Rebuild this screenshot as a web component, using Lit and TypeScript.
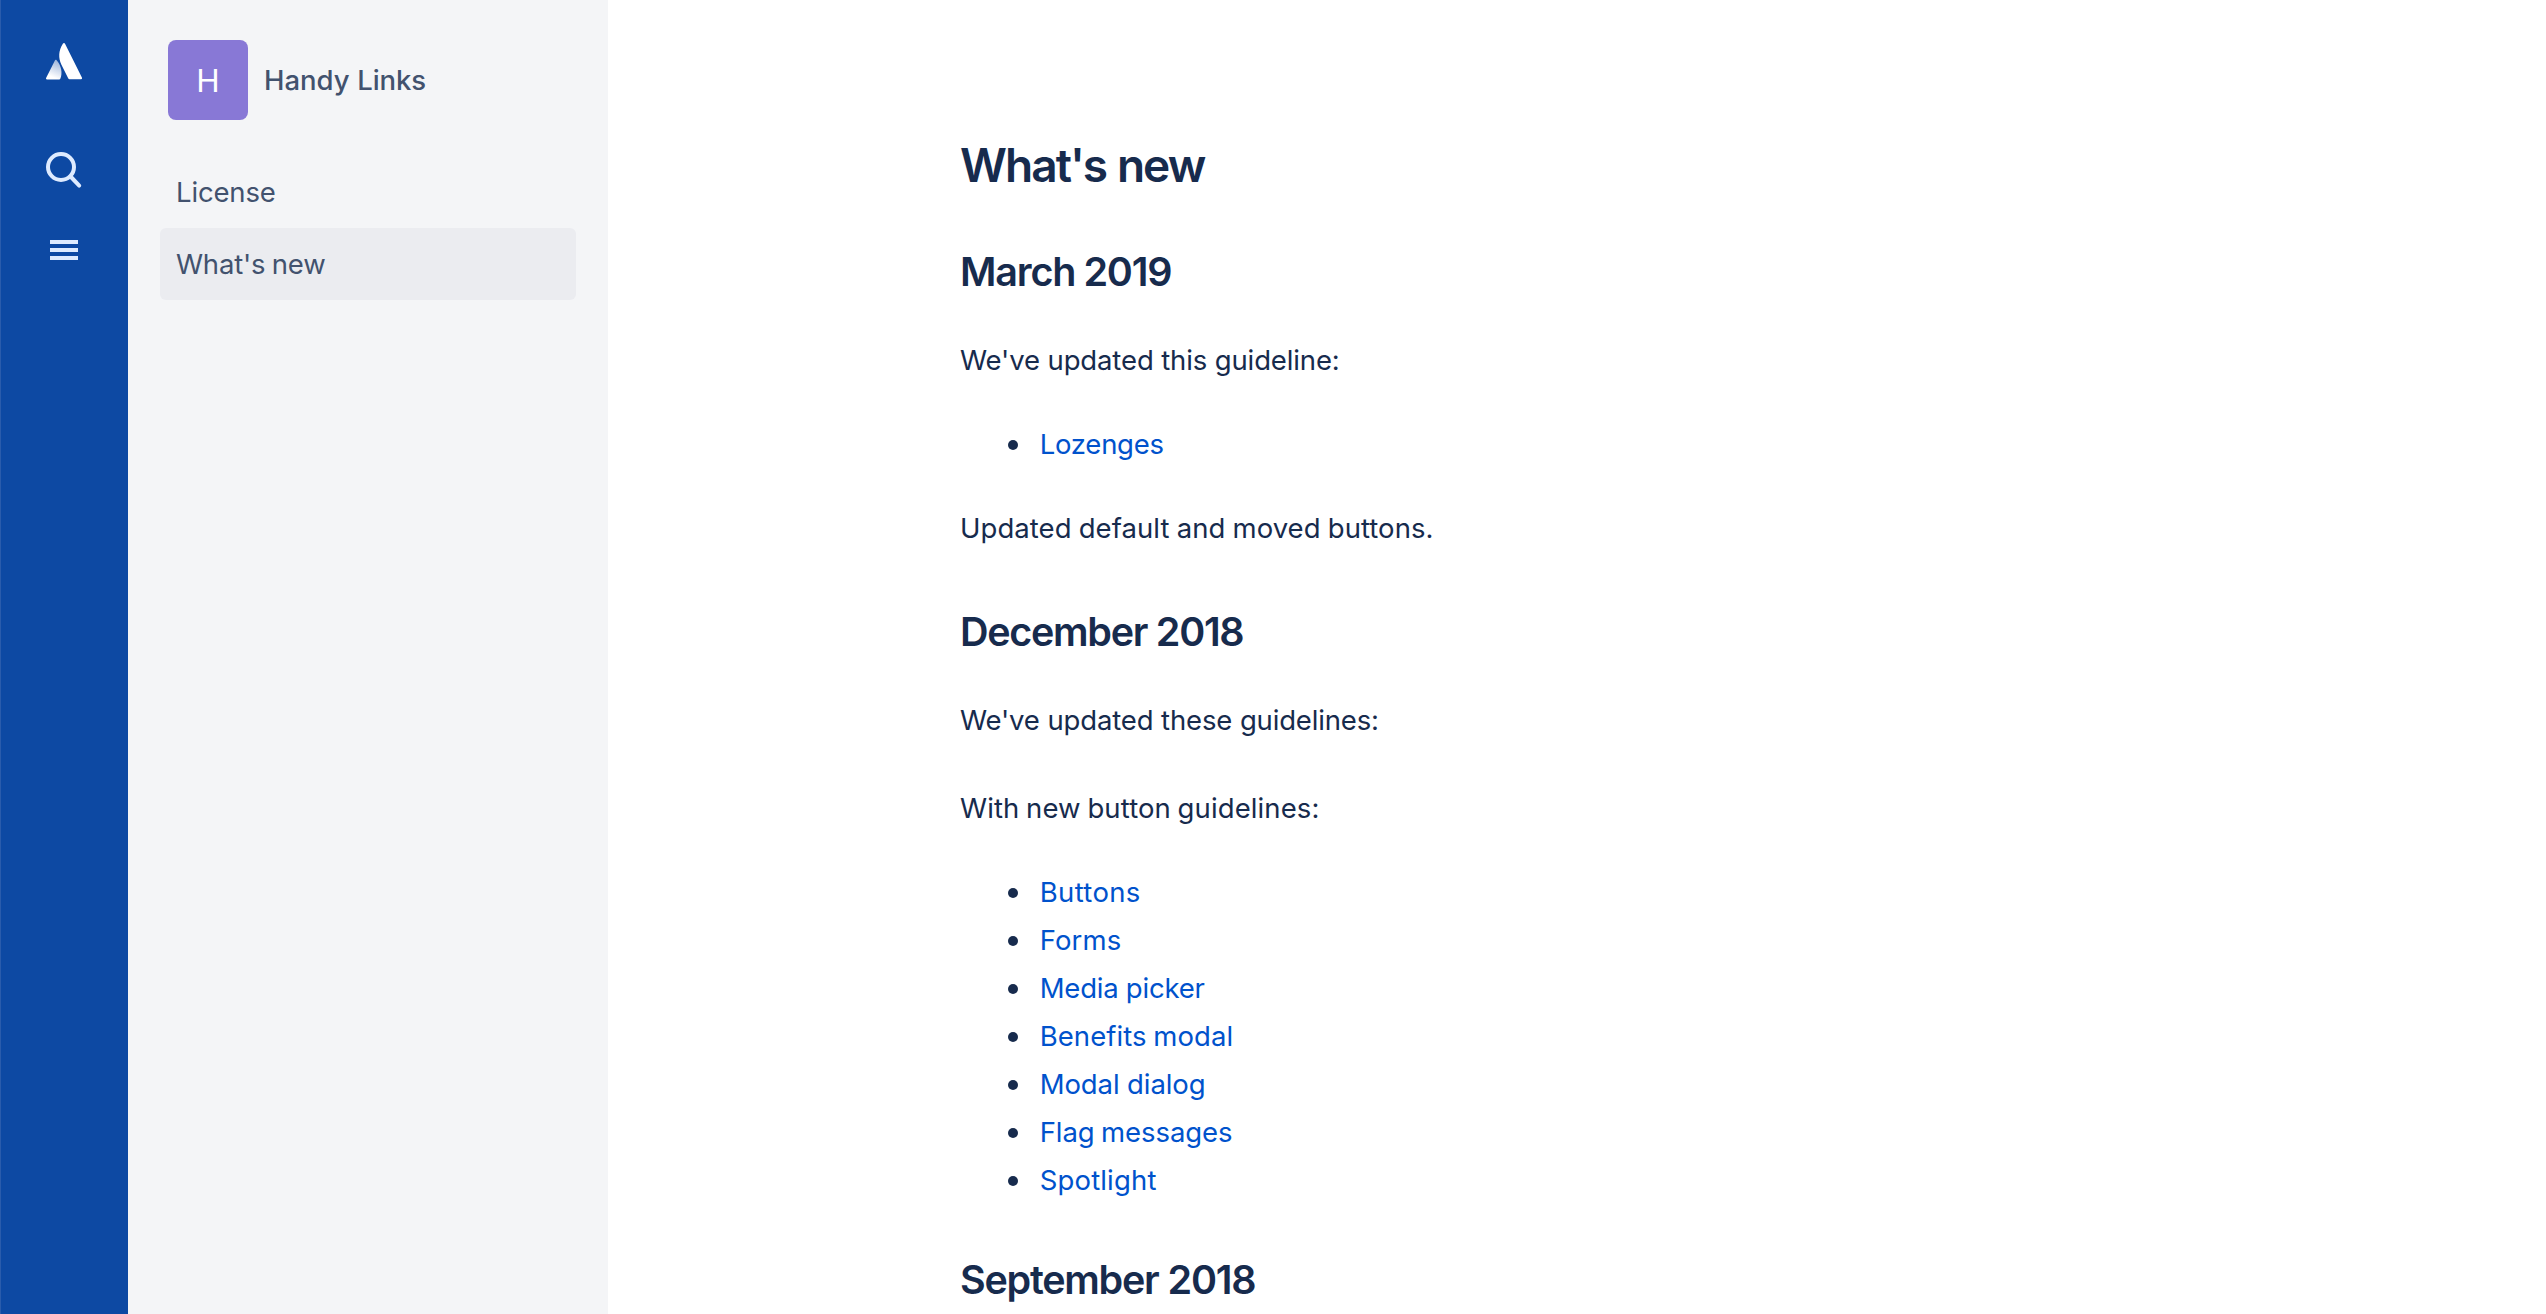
import { LitElement, html, svg, css } from "lit";
import { customElement } from "lit/decorators.js";
import { styleMap } from "lit/directives/style-map.js";

/** Text with its own tracking: letter and word spacing in pixels. */
interface Label {
  text: string;
  ls?: number;
  ws?: number;
}

type Block =
  | { kind: "h2" | "p"; label: Label }
  | { kind: "list"; items: Label[] };

const title: Label = { text: "What's new", ls: -1.95, ws: 1.2 };

const blocks: Block[] = [
  { kind: "h2", label: { text: "March 2019", ls: -1.15, ws: -0.8 } },
  { kind: "p", label: { text: "We've updated this guideline:", ls: -0.127, ws: 0 } },
  { kind: "list", items: [{ text: "Lozenges", ls: -0.253 }] },
  { kind: "p", label: { text: "Updated default and moved buttons.", ls: 0.06, ws: -0.673 } },
  { kind: "h2", label: { text: "December 2018", ls: -1.3, ws: 0.1 } },
  { kind: "p", label: { text: "We've updated these guidelines:", ls: -0.163, ws: 0.2 } },
  { kind: "p", label: { text: "With new button guidelines:", ls: 0.11, ws: -1.181 } },
  {
    kind: "list",
    items: [
      { text: "Buttons", ls: 0.35 },
      { text: "Forms", ls: 0.15 },
      { text: "Media picker", ls: -0.18, ws: -0.4 },
      { text: "Benefits modal", ls: 0.07, ws: -1.1 },
      { text: "Modal dialog", ls: -0.1 },
      { text: "Flag messages", ls: -0.1, ws: -1 },
      { text: "Spotlight", ls: 0.16 },
    ],
  },
  { kind: "h2", label: { text: "September 2018", ls: -1.27, ws: 0.45 } },
];

const pages: (Label & { selected?: boolean })[] = [
  { text: "License", ls: -0.157 },
  { text: "What's new", ls: -0.225, ws: -0.864, selected: true },
];

const label = (l: Label) => html`<span
  style=${styleMap({ letterSpacing: `${l.ls ?? 0}px`, wordSpacing: `${l.ws ?? 0}px` })}
  >${l.text}</span
>`;

@customElement("app-rail")
export class AppRail extends LitElement {
  static styles = css`
    :host {
      display: flex;
      flex-direction: column;
      align-items: center;
      flex: none;
      box-sizing: border-box;
      width: 128px;
      padding-top: 36px;
      background: #0d49a3;
      box-shadow: inset 1px 0 #2a5cac;
    }
    .icon {
      display: block;
      width: 56px;
      height: 50px;
    }
    .search {
      margin-top: 58px;
    }
    .menu {
      margin-top: 31px;
    }
  `;
  render() {
    return html`
      <svg class="icon" viewBox="36 36 56 50">
        ${svg`
          <defs>
            <linearGradient id="wing" x1="0.62" y1="0.05" x2="0.35" y2="0.85">
              <stop offset="0" stop-color="#a3b9dc" />
              <stop offset="1" stop-color="#ffffff" />
            </linearGradient>
          </defs>
          <path fill="url(#wing)" d="M56.6 60.2C56.1 59.6 55.3 59.6 54.9 60.4L46.1 78.1C45.8 78.8 46.2 79.5 47 79.5H59.2C59.7 79.5 60.1 79.3 60.3 78.8C62.9 73.2 61.3 65.3 56.6 60.2Z" />
          <path fill="#ffffff" d="M63 43.6C58.2 50.8 58.4 58.4 61.3 64.4L68.3 78.5C68.6 79 69 79.2 69.5 79.2H81.1C81.9 79.2 82.3 78.5 82 77.8L64.9 43.6C64.5 42.8 63.5 42.8 63 43.6Z" />
        `}
      </svg>
      <svg class="icon search" viewBox="36 144 56 50" fill="none" stroke="#deebff" stroke-width="4" stroke-linecap="round">
        <circle cx="61" cy="167" r="13" />
        <path d="M71.5 177.5L79.2 185.6" />
      </svg>
      <svg class="icon menu" viewBox="36 225 56 50" fill="#deebff">
        <rect x="50" y="240" width="28" height="4" />
        <rect x="50" y="248" width="28" height="4" />
        <rect x="50" y="256" width="28" height="4" />
      </svg>
    `;
  }
}

@customElement("app-sidebar")
export class AppSidebar extends LitElement {
  static styles = css`
    :host {
      display: block;
      flex: none;
      box-sizing: border-box;
      width: 480px;
      padding: 40px 32px 0;
      background: #f4f5f7;
      color: #42526e;
    }
    .space {
      display: flex;
      align-items: center;
      gap: 16px;
      padding-left: 8px;
      margin-bottom: 36px;
      line-height: 48px;
      font-weight: 550;
    }
    .avatar {
      width: 80px;
      height: 80px;
      border-radius: 8px;
      background: #8878d6;
      color: #fff;
      font-size: 31.5px;
      font-weight: 400;
      line-height: 81px;
      text-align: center;
    }
    .page {
      display: block;
      padding-left: 16px;
      border-radius: 6px;
      line-height: 72px;
    }
    .selected {
      background: #ebecf0;
    }
  `;
  render() {
    return html`
      <div class="space">
        <div class="avatar">H</div>
        ${label({ text: "Handy Links", ls: -0.04, ws: 0.4 })}
      </div>
      <nav>
        ${pages.map((p) => html`<a class="page ${p.selected ? "selected" : ""}">${label(p)}</a>`)}
      </nav>
    `;
  }
}

@customElement("app-article")
export class AppArticle extends LitElement {
  static styles = css`
    :host {
      display: block;
      flex: 1;
      min-width: 0;
      box-sizing: border-box;
      padding: 137px 0 0 352px;
      line-height: 48px;
      color: #172b4d;
    }
    h1,
    h2,
    p,
    ul {
      margin: 0;
      padding: 0;
    }
    h1 {
      font-size: 46px;
      line-height: 56px;
      font-weight: 570;
    }
    h2 {
      margin-top: 56px;
      font-size: 39.5px;
      font-weight: 560;
    }
    h1 + h2 {
      margin-top: 55px;
    }
    p {
      margin-top: 40px;
    }
    ul {
      list-style: none;
      margin-top: 36px;
      padding-left: 48px;
    }
    ul + p {
      margin-top: 36px;
    }
    ul + h2 {
      margin-top: 52px;
    }
    li {
      display: flex;
      align-items: center;
      gap: 21.7px;
    }
    li::before {
      content: "";
      width: 10px;
      height: 10px;
      margin-top: 2px;
      border-radius: 50%;
      background: #172b4d;
    }
    .link {
      color: #0052cc;
    }
  `;
  render() {
    return html`
      <h1>${label(title)}</h1>
      ${blocks.map((b) => {
        if (b.kind === "list") {
          return html`<ul>
            ${b.items.map((i) => html`<li><a class="link">${label(i)}</a></li>`)}
          </ul>`;
        }
        return b.kind === "h2" ? html`<h2>${label(b.label)}</h2>` : html`<p>${label(b.label)}</p>`;
      })}
    `;
  }
}

@customElement("app-root")
export class AppRoot extends LitElement {
  static styles = css`
    :host {
      display: flex;
      height: 1314px;
      overflow: hidden;
      background: #fff;
      font-family: Inter, "Liberation Sans", sans-serif;
      font-size: 27.5px;
    }
  `;
  render() {
    return html`<app-rail></app-rail><app-sidebar></app-sidebar><app-article></app-article>`;
  }
}
